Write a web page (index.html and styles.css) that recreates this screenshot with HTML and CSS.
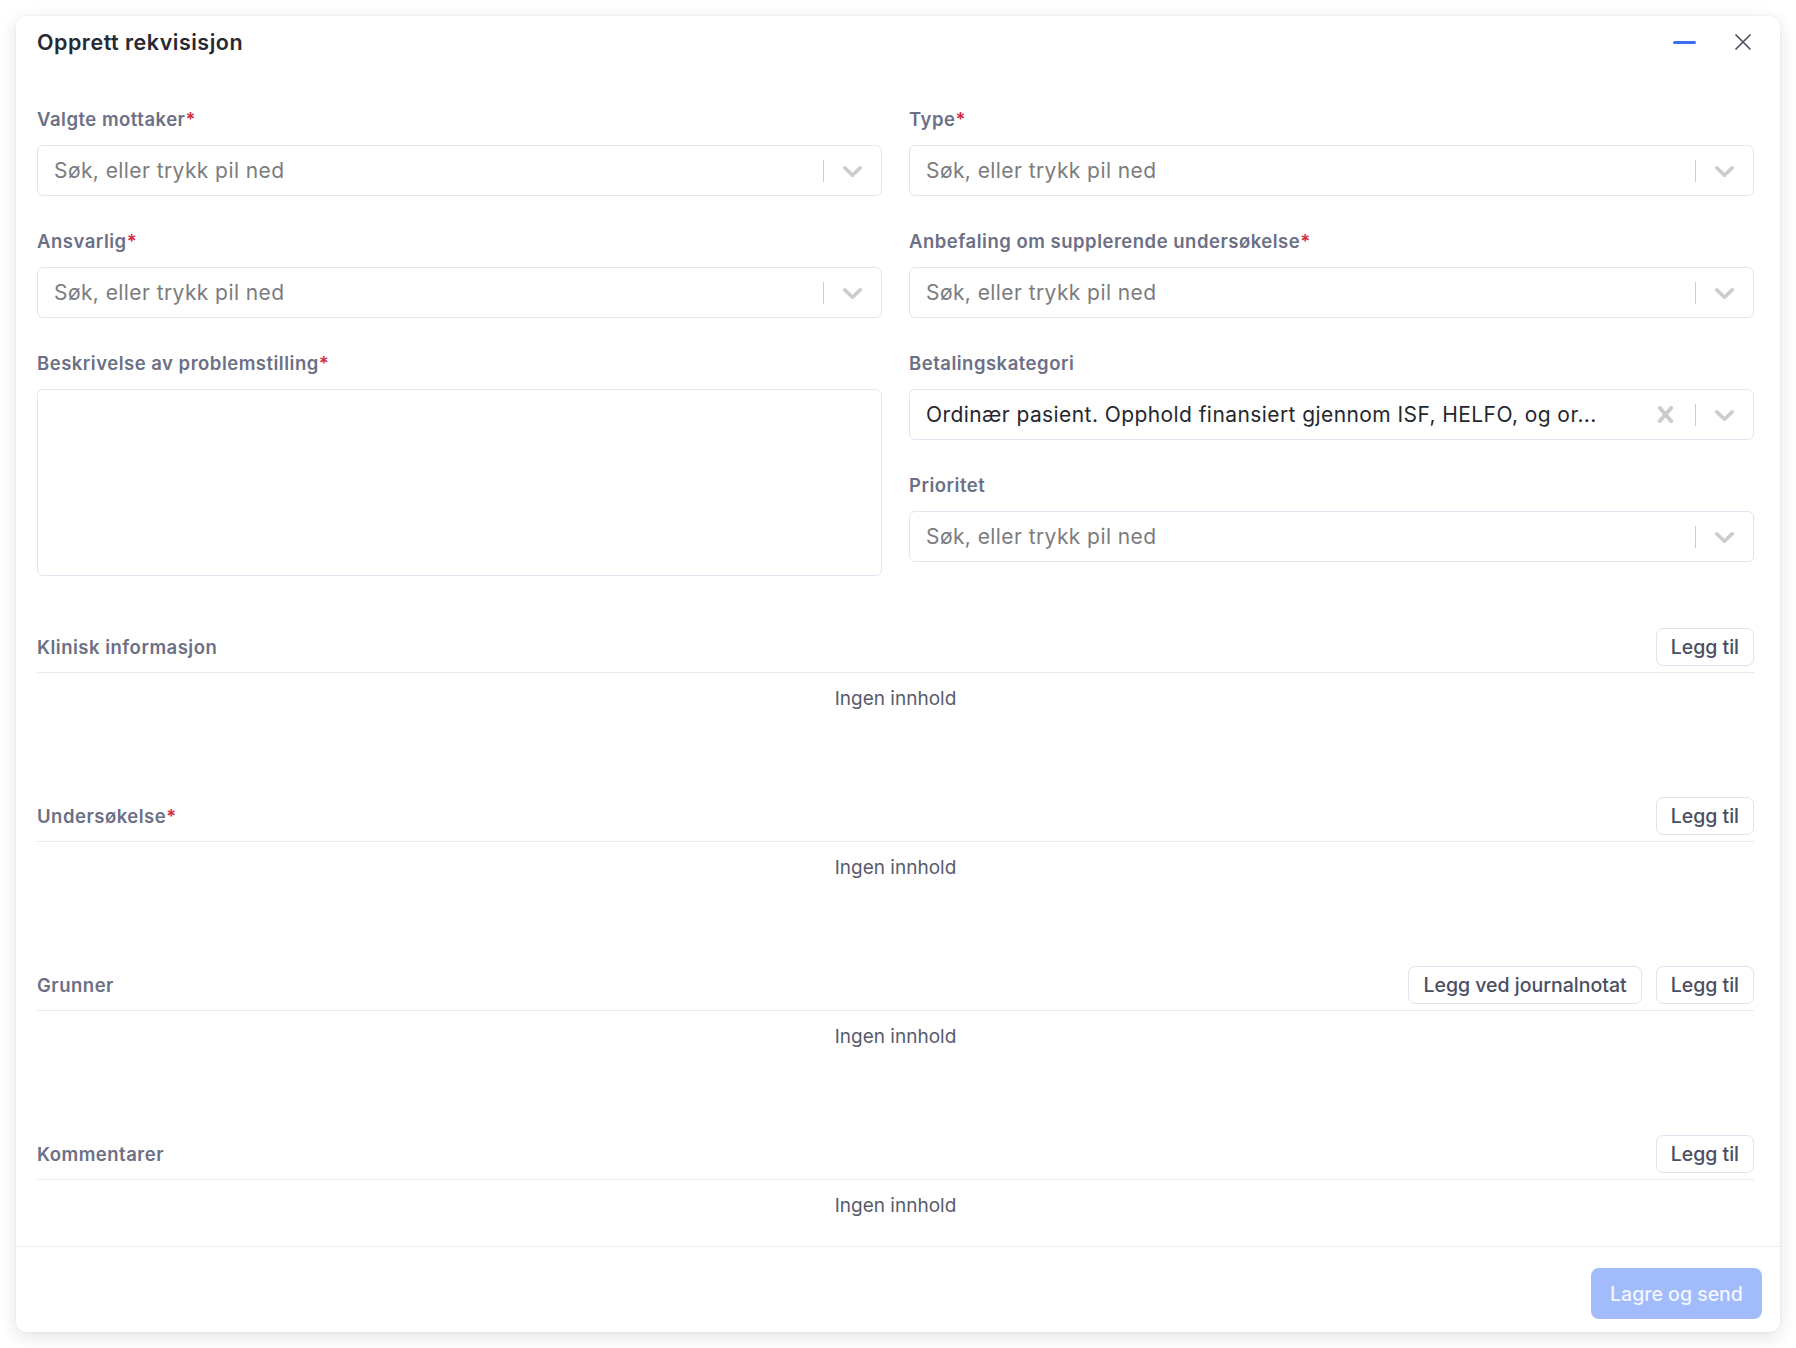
FILE: index.html
```html
<!DOCTYPE html>
<html lang="no">
<head>
<meta charset="utf-8">
<title>Opprett rekvisisjon</title>
<link rel="stylesheet" href="styles.css">
</head>
<body>
<div class="screen">
  <div class="modal">
    <div class="modal-header">
      <h1 class="modal-title">Opprett rekvisisjon</h1>
      <div class="header-actions">
        <button class="icon-btn" aria-label="Minimer">
          <svg width="23" height="3" viewBox="0 0 23 3"><rect width="23" height="3" rx="1.5" fill="#3b6ef1"/></svg>
        </button>
        <button class="icon-btn" aria-label="Lukk">
          <svg width="16" height="16" viewBox="0 0 16 16"><path d="M1 1L15 15M15 1L1 15" stroke="#4d5160" stroke-width="1.7" stroke-linecap="round"/></svg>
        </button>
      </div>
    </div>

    <div class="modal-body">
      <div class="fields">
        <div class="col">
          <div class="field">
            <label class="label">Valgte mottaker<span class="req">*</span></label>
            <div class="select">
              <div class="select-value placeholder">Søk, eller trykk pil ned</div>
              <div class="indicators">
                <span class="sep"></span>
                <span class="ind"><svg class="chev" width="33" height="33" viewBox="0 0 20 20"><path d="M4.516 7.548c0.436-0.446 1.043-0.481 1.576 0l3.908 3.747 3.908-3.747c0.533-0.481 1.141-0.446 1.574 0 0.436 0.445 0.408 1.197 0 1.615-0.406 0.418-4.695 4.502-4.695 4.502-0.217 0.223-0.502 0.335-0.787 0.335s-0.57-0.112-0.789-0.335c0 0-4.287-4.084-4.695-4.502s-0.436-1.17 0-1.615z"/></svg></span>
              </div>
            </div>
          </div>
          <div class="field">
            <label class="label">Ansvarlig<span class="req">*</span></label>
            <div class="select">
              <div class="select-value placeholder">Søk, eller trykk pil ned</div>
              <div class="indicators">
                <span class="sep"></span>
                <span class="ind"><svg class="chev" width="33" height="33" viewBox="0 0 20 20"><path d="M4.516 7.548c0.436-0.446 1.043-0.481 1.576 0l3.908 3.747 3.908-3.747c0.533-0.481 1.141-0.446 1.574 0 0.436 0.445 0.408 1.197 0 1.615-0.406 0.418-4.695 4.502-4.695 4.502-0.217 0.223-0.502 0.335-0.787 0.335s-0.57-0.112-0.789-0.335c0 0-4.287-4.084-4.695-4.502s-0.436-1.17 0-1.615z"/></svg></span>
              </div>
            </div>
          </div>
          <div class="field">
            <label class="label">Beskrivelse av problemstilling<span class="req">*</span></label>
            <div class="textarea"></div>
          </div>
        </div>

        <div class="col">
          <div class="field">
            <label class="label">Type<span class="req">*</span></label>
            <div class="select">
              <div class="select-value placeholder">Søk, eller trykk pil ned</div>
              <div class="indicators">
                <span class="sep"></span>
                <span class="ind"><svg class="chev" width="33" height="33" viewBox="0 0 20 20"><path d="M4.516 7.548c0.436-0.446 1.043-0.481 1.576 0l3.908 3.747 3.908-3.747c0.533-0.481 1.141-0.446 1.574 0 0.436 0.445 0.408 1.197 0 1.615-0.406 0.418-4.695 4.502-4.695 4.502-0.217 0.223-0.502 0.335-0.787 0.335s-0.57-0.112-0.789-0.335c0 0-4.287-4.084-4.695-4.502s-0.436-1.17 0-1.615z"/></svg></span>
              </div>
            </div>
          </div>
          <div class="field">
            <label class="label">Anbefaling om supplerende undersøkelse<span class="req">*</span></label>
            <div class="select">
              <div class="select-value placeholder">Søk, eller trykk pil ned</div>
              <div class="indicators">
                <span class="sep"></span>
                <span class="ind"><svg class="chev" width="33" height="33" viewBox="0 0 20 20"><path d="M4.516 7.548c0.436-0.446 1.043-0.481 1.576 0l3.908 3.747 3.908-3.747c0.533-0.481 1.141-0.446 1.574 0 0.436 0.445 0.408 1.197 0 1.615-0.406 0.418-4.695 4.502-4.695 4.502-0.217 0.223-0.502 0.335-0.787 0.335s-0.57-0.112-0.789-0.335c0 0-4.287-4.084-4.695-4.502s-0.436-1.17 0-1.615z"/></svg></span>
              </div>
            </div>
          </div>
          <div class="field">
            <label class="label">Betalingskategori</label>
            <div class="select">
              <div class="select-value">Ordinær pasient. Opphold finansiert gjennom ISF, HELFO, og or...</div>
              <div class="indicators">
                <span class="ind clear"><svg class="chev" width="33" height="33" viewBox="0 0 20 20"><path d="M14.348 14.849c-0.469 0.469-1.229 0.469-1.697 0l-2.651-3.030-2.651 3.029c-0.469 0.469-1.229 0.469-1.697 0-0.469-0.469-0.469-1.229 0-1.697l2.758-3.15-2.759-3.152c-0.469-0.469-0.469-1.228 0-1.697s1.228-0.469 1.697 0l2.652 3.031 2.651-3.031c0.469-0.469 1.228-0.469 1.697 0s0.469 1.229 0 1.697l-2.758 3.152 2.758 3.15c0.469 0.469 0.469 1.229 0 1.698z"/></svg></span>
                <span class="sep"></span>
                <span class="ind"><svg class="chev" width="33" height="33" viewBox="0 0 20 20"><path d="M4.516 7.548c0.436-0.446 1.043-0.481 1.576 0l3.908 3.747 3.908-3.747c0.533-0.481 1.141-0.446 1.574 0 0.436 0.445 0.408 1.197 0 1.615-0.406 0.418-4.695 4.502-4.695 4.502-0.217 0.223-0.502 0.335-0.787 0.335s-0.57-0.112-0.789-0.335c0 0-4.287-4.084-4.695-4.502s-0.436-1.17 0-1.615z"/></svg></span>
              </div>
            </div>
          </div>
          <div class="field">
            <label class="label">Prioritet</label>
            <div class="select">
              <div class="select-value placeholder">Søk, eller trykk pil ned</div>
              <div class="indicators">
                <span class="sep"></span>
                <span class="ind"><svg class="chev" width="33" height="33" viewBox="0 0 20 20"><path d="M4.516 7.548c0.436-0.446 1.043-0.481 1.576 0l3.908 3.747 3.908-3.747c0.533-0.481 1.141-0.446 1.574 0 0.436 0.445 0.408 1.197 0 1.615-0.406 0.418-4.695 4.502-4.695 4.502-0.217 0.223-0.502 0.335-0.787 0.335s-0.57-0.112-0.789-0.335c0 0-4.287-4.084-4.695-4.502s-0.436-1.17 0-1.615z"/></svg></span>
              </div>
            </div>
          </div>
        </div>
      </div>

      <div class="sections">
        <section class="section">
          <div class="section-head">
            <span class="section-title">Klinisk informasjon</span>
            <div class="section-actions"><button class="btn">Legg til</button></div>
          </div>
          <div class="empty">Ingen innhold</div>
        </section>
        <section class="section">
          <div class="section-head">
            <span class="section-title">Undersøkelse<span class="req">*</span></span>
            <div class="section-actions"><button class="btn">Legg til</button></div>
          </div>
          <div class="empty">Ingen innhold</div>
        </section>
        <section class="section">
          <div class="section-head">
            <span class="section-title">Grunner</span>
            <div class="section-actions"><button class="btn">Legg ved journalnotat</button><button class="btn">Legg til</button></div>
          </div>
          <div class="empty">Ingen innhold</div>
        </section>
        <section class="section">
          <div class="section-head">
            <span class="section-title">Kommentarer</span>
            <div class="section-actions"><button class="btn">Legg til</button></div>
          </div>
          <div class="empty">Ingen innhold</div>
        </section>
      </div>
    </div>

    <div class="modal-footer">
      <button class="primary">Lagre og send</button>
    </div>
  </div>
</div>
</body>
</html>
```

FILE: styles.css
```css
* { box-sizing: border-box; }

html, body {
  margin: 0;
  background: #ffffff;
  font-family: Inter, "Noto Sans", "Liberation Sans", sans-serif;
}

.screen {
  padding: 16px;
}

.modal {
  background: #ffffff;
  border-radius: 10px;
  box-shadow: 0 5px 18px rgba(20, 22, 40, 0.12), 0 0 3px rgba(20, 22, 40, 0.06);
  overflow: hidden;
}

.modal-header {
  display: flex;
  align-items: center;
  justify-content: space-between;
  padding: 12px 29px 0 21px;
}

.modal-title {
  margin: 0;
  font-size: 21.5px;
  font-weight: 600;
  letter-spacing: 0.5px;
  line-height: 28px;
  color: #262932;
}

.header-actions {
  display: flex;
  align-items: center;
  gap: 39px;
}

.icon-btn {
  border: 0;
  background: none;
  padding: 0;
  display: flex;
  align-items: center;
  justify-content: center;
  height: 28px;
}

.modal-body {
  padding: 52px 26px 2px 21px;
}

.fields {
  display: grid;
  grid-template-columns: 1fr 1fr;
  column-gap: 27px;
  align-items: start;
}

.col {
  display: flex;
  flex-direction: column;
  gap: 34px;
}

.label {
  display: block;
  font-size: 18.5px;
  font-weight: 600;
  letter-spacing: 0.5px;
  line-height: 22px;
  color: #6c7086;
  margin-bottom: 15px;
}

.req {
  color: #d22a40;
}

.select {
  height: 51px;
  border: 1px solid #e2e4ef;
  border-radius: 6px;
  display: flex;
  align-items: center;
  padding-left: 16px;
  background: #fff;
}

.select-value {
  flex: 1;
  min-width: 0;
  font-size: 21px;
  letter-spacing: 0.42px;
  line-height: 26px;
  white-space: nowrap;
  overflow: hidden;
  text-overflow: ellipsis;
  color: #25272e;
}

.select-value.placeholder {
  color: #7b7c80;
}

.indicators {
  display: flex;
  align-items: center;
  height: 100%;
}

.sep {
  width: 1px;
  height: 22px;
  background: #cccccc;
}

.ind {
  width: 57px;
  display: flex;
  align-items: center;
  justify-content: center;
}

.ind.clear {
  width: 59px;
}

.chev {
  fill: #cccccc;
  display: block;
}

.textarea {
  height: 187px;
  border: 1px solid #e2e4ef;
  border-radius: 6px;
  background: #fff;
}

.sections {
  margin-top: 52px;
  display: flex;
  flex-direction: column;
  gap: 60px;
}

.section-head {
  display: flex;
  align-items: center;
  justify-content: space-between;
  padding-bottom: 6px;
  border-bottom: 1px solid #e8e9f1;
}

.section-title {
  font-size: 18.5px;
  font-weight: 600;
  letter-spacing: 0.5px;
  color: #6c7086;
}

.section-actions {
  display: flex;
  gap: 14px;
}

.btn {
  height: 38px;
  padding: 0 14px;
  border: 1px solid #e0e2ef;
  border-radius: 7px;
  background: #fff;
  font-family: Inter, "Noto Sans", sans-serif;
  font-size: 19.5px;
  font-weight: 500;
  color: #4a4e62;
}

.empty {
  text-align: center;
  padding: 14px 0 26px;
  line-height: 24px;
  font-size: 19px;
  color: #575b6c;
}

.modal-footer {
  border-top: 1px solid #eeeff4;
  padding: 21px 18px 13px;
  display: flex;
  justify-content: flex-end;
}

.primary {
  width: 171px;
  height: 51px;
  border: 0;
  border-radius: 8px;
  background: #a2bbfb;
  color: #f3f6ff;
  font-family: Inter, "Noto Sans", sans-serif;
  font-size: 19.5px;
  font-weight: 500;
}
```
